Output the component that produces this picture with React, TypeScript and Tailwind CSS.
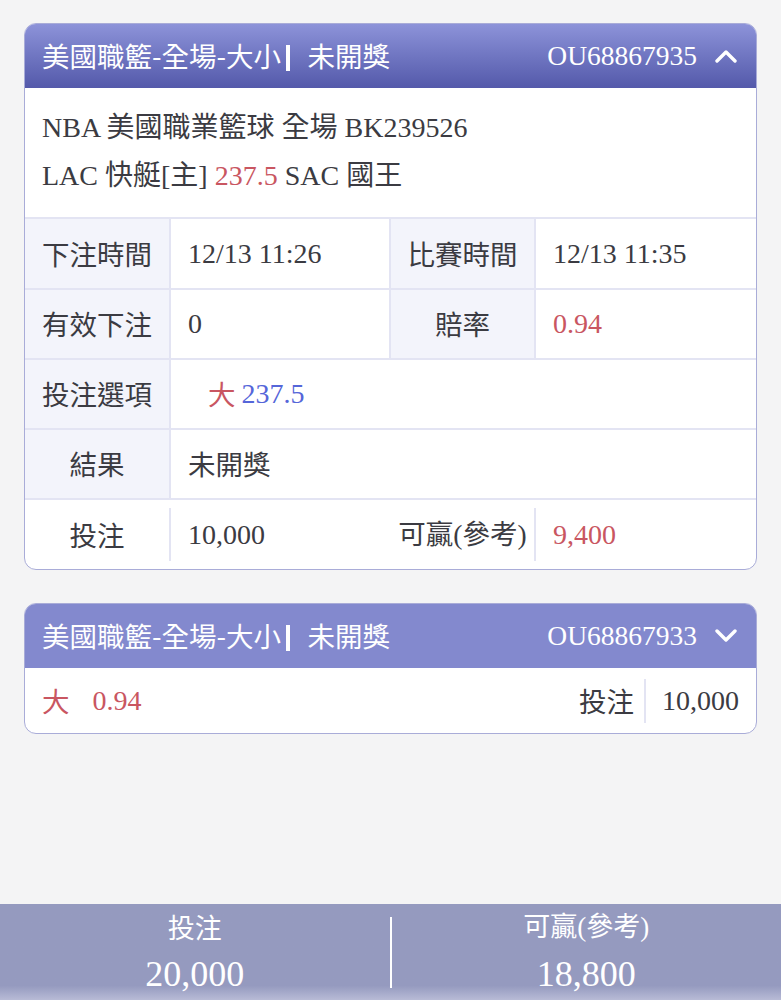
import React from 'react'

const serif = "font-['Liberation_Serif','Noto_Sans_CJK_TC',serif]"
const sans = "font-['Noto_Sans_CJK_TC','Liberation_Sans',sans-serif]"

function Chevron({ up }: { up?: boolean }) {
  return (
    <svg width="22" height="14" viewBox="0 0 22 14" fill="none" className="ml-[18px]">
      <path
        d={up ? 'M2 12 L11 3 L20 12' : 'M2 2 L11 11 L20 2'}
        stroke="white"
        strokeWidth="3.4"
        strokeLinecap="round"
        strokeLinejoin="round"
      />
    </svg>
  )
}

function CardHeader({ id, up, gradient }: { id: string; up?: boolean; gradient?: boolean }) {
  return (
    <div
      className={`flex items-center justify-between h-[64px] pl-[17px] pr-[19px] text-white ${
        gradient ? 'bg-gradient-to-b from-[#8d93d9] to-[#5459aa]' : 'bg-[#8389ce]'
      }`}
    >
      <div className={`${sans} text-[27.5px] flex items-center leading-none`}>
        <span>美國職籃-全場-大小</span>
        <span className="inline-block w-[3.5px] h-[26px] bg-white ml-[5px] mr-[18px] mt-[3px]" />
        <span>未開獎</span>
      </div>
      <div className="flex items-center">
        <span className={`${serif} text-[27.5px] leading-none`}>{id}</span>
        <Chevron up={up} />
      </div>
    </div>
  )
}

const line = 'border-[#e3e4f3]'
const label = `${sans} bg-[#f3f4fb] flex items-center justify-center text-[27.5px] text-[#3b3b42] whitespace-nowrap`
const value = `${serif} flex items-center pl-[17px] text-[28px] text-[#3b3b42]`

export default function App() {
  return (
    <div className="min-h-[1000px] bg-[#f4f4f5] flex flex-col">
      <div className="px-6 pt-[23px]">
        {/* card 1 */}
        <div className="rounded-[12px] border-[1.5px] border-[#a9acd8] bg-white overflow-hidden">
          <CardHeader id="OU68867935" up gradient />
          <div className={`${serif} text-[28px] text-[#3b3b42] pl-[17px] pt-4 pb-[17px] leading-[48px]`}>
            <div>NBA 美國職業籃球 全場 BK239526</div>
            <div>
              LAC 快艇[主] <span className="text-[#c95661]">237.5</span> SAC 國王
            </div>
          </div>
          <div className={`grid grid-cols-[146px_220px_145px_1fr] border-t-2 ${line}`}>
            <div className={`${label} h-[69px] border-r-2 ${line}`}>下注時間</div>
            <div className={`${value} border-r-2 ${line}`}>12/13 11:26</div>
            <div className={`${label} border-r-2 ${line}`}>比賽時間</div>
            <div className={value}>12/13 11:35</div>
          </div>
          <div className={`grid grid-cols-[146px_220px_145px_1fr] border-t-2 ${line}`}>
            <div className={`${label} h-[68px] border-r-2 ${line}`}>有效下注</div>
            <div className={`${value} border-r-2 ${line}`}>0</div>
            <div className={`${label} border-r-2 ${line}`}>賠率</div>
            <div className={`${value} !text-[#c95661]`}>0.94</div>
          </div>
          <div className={`grid grid-cols-[146px_1fr] border-t-2 ${line}`}>
            <div className={`${label} h-[68px] border-r-2 ${line}`}>投注選項</div>
            <div className={`${value} pl-[37px]`}>
              <span className={`${sans} text-[27.5px] text-[#c95661] mr-[6px]`}>大</span>
              <span className="text-[#5566d9]">237.5</span>
            </div>
          </div>
          <div className={`grid grid-cols-[146px_1fr] border-t-2 ${line}`}>
            <div className={`${label} h-[68px] border-r-2 ${line}`}>結果</div>
            <div className={`${value} ${sans} !text-[27.5px]`}>未開獎</div>
          </div>
          <div className={`grid grid-cols-[146px_220px_145px_1fr] border-t-2 ${line} h-[71px] items-center`}>
            <div className={`${sans} text-[27.5px] text-[#3b3b42] h-[53px] flex items-center justify-center border-r-2 ${line}`}>
              投注
            </div>
            <div className={value}>10,000</div>
            <div className={`${serif} text-[27.5px] text-[#3b3b42] h-[53px] flex items-center justify-center border-r-2 ${line} whitespace-nowrap`}>
              可贏(參考)
            </div>
            <div className={`${value} !text-[#c95661]`}>9,400</div>
          </div>
        </div>

        {/* card 2 */}
        <div className="mt-[33px] rounded-[12px] border-[1.5px] border-[#a9acd8] bg-white overflow-hidden">
          <CardHeader id="OU68867933" />
          <div className="h-[65px] flex items-center justify-between pl-[17px] pr-[17px]">
            <div className="flex items-center text-[#c95661]">
              <span className={`${sans} text-[27.5px]`}>大</span>
              <span className={`${serif} text-[28px] ml-[23px]`}>0.94</span>
            </div>
            <div className="flex items-center text-[#3b3b42]">
              <span className={`${sans} text-[27.5px]`}>投注</span>
              <span className="w-[2px] h-[44px] bg-[#e3e4f3] ml-[10px] mr-[16px]" />
              <span className={`${serif} text-[28px]`}>10,000</span>
            </div>
          </div>
        </div>
      </div>

      {/* bottom summary */}
      <div className="mt-auto h-[96px] bg-gradient-to-b from-[#959abf] via-[#959abf] via-85% to-[#b8bbd6] flex items-center text-white">
        <div className="flex-1 flex flex-col items-center pt-[1px]">
          <div className={`${sans} text-[27px] leading-[30px]`}>投注</div>
          <div className={`${serif} text-[36px] leading-[40px] mt-[12px]`}>20,000</div>
        </div>
        <div className="w-[2px] h-[71px] bg-white" />
        <div className="flex-1 flex flex-col items-center pt-[1px]">
          <div className={`${serif} text-[27px] leading-[30px]`}>可贏(參考)</div>
          <div className={`${serif} text-[36px] leading-[40px] mt-[12px]`}>18,800</div>
        </div>
      </div>
    </div>
  )
}
